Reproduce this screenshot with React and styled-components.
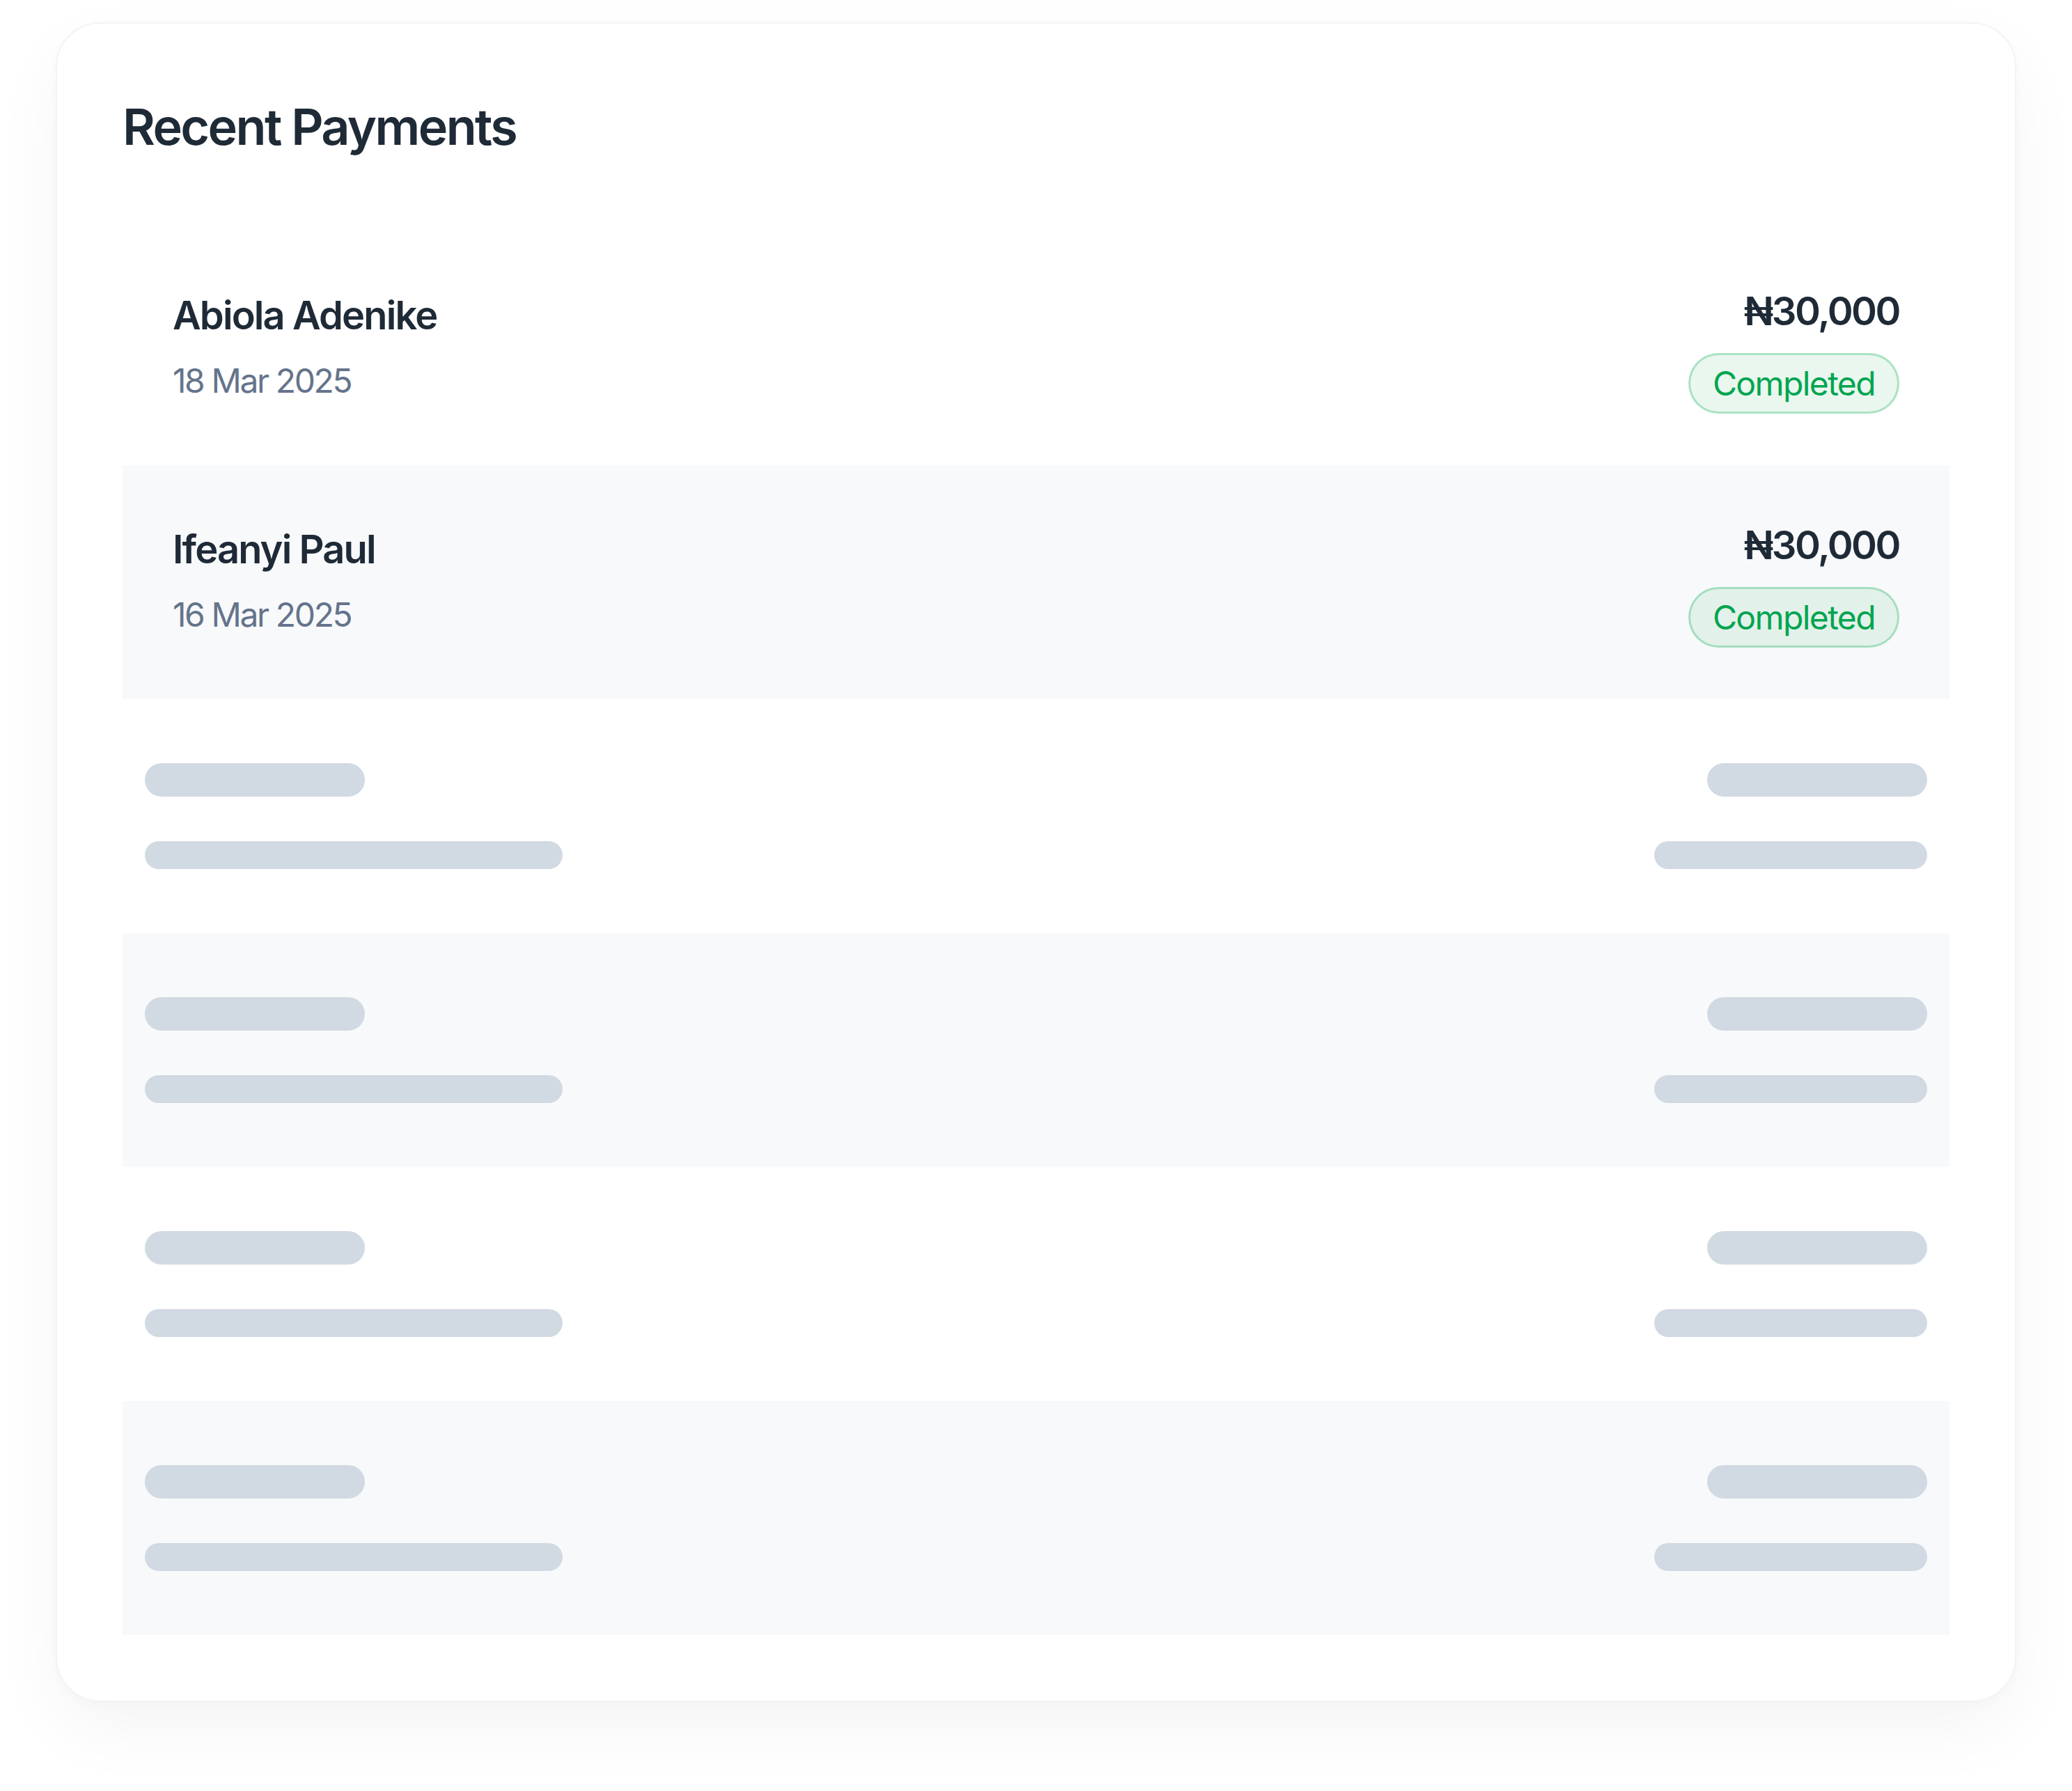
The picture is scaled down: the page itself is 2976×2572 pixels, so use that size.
import styled, { createGlobalStyle } from 'styled-components'

const GlobalStyle = createGlobalStyle`
  * { box-sizing: border-box; }
  html, body {
    margin: 0;
    padding: 0;
    background: #ffffff;
    font-family: Inter, "Noto Sans", "DejaVu Sans", sans-serif;
    -webkit-font-smoothing: antialiased;
  }
`

const payments = [
  { name: 'Abiola Adenike', date: '18 Mar 2025', amount: '₦30,000', status: 'Completed' },
  { name: 'Ifeanyi Paul', date: '16 Mar 2025', amount: '₦30,000', status: 'Completed' }
]

const placeholders = 4

export default function App() {
  return (
    <>
      <GlobalStyle />
      <Page>
        <Card>
          <Title>Recent Payments</Title>
          <List>
            {payments.map((p, i) => (
              <Row key={p.name} $striped={i % 2 === 1}>
                <Left>
                  <Name>{p.name}</Name>
                  <DateText>{p.date}</DateText>
                </Left>
                <Right>
                  <Amount>{p.amount}</Amount>
                  <Badge>{p.status}</Badge>
                </Right>
              </Row>
            ))}
            {Array.from({ length: placeholders }).map((_, i) => (
              <SkeletonRow key={i} $striped={(payments.length + i) % 2 === 1}>
                <SkeletonCol>
                  <Bar $w={316} $h={48} />
                  <Bar $w={600} $h={40} />
                </SkeletonCol>
                <SkeletonCol $right>
                  <Bar $w={316} $h={48} />
                  <Bar $w={392} $h={40} />
                </SkeletonCol>
              </SkeletonRow>
            ))}
          </List>
        </Card>
      </Page>
    </>
  )
}

const Page = styled.div`
  padding: 32px 80px 128px;
`

const Card = styled.div`
  background: #ffffff;
  border: 2px solid #f2f4f6;
  border-radius: 64px;
  padding: 94px;
  box-shadow: 0 40px 100px rgba(16, 24, 40, 0.045), 0 4px 16px rgba(16, 24, 40, 0.02);
`

const Title = styled.h2`
  margin: 0 0 96px;
  font-size: 72px;
  line-height: 108px;
  font-weight: 600;
  letter-spacing: -2.65px;
  color: #1f2a37;
`

const List = styled.div`
  display: flex;
  flex-direction: column;
`

const Row = styled.div`
  height: 336px;
  padding: 0 72px;
  display: flex;
  align-items: center;
  justify-content: space-between;
  background: ${p => (p.$striped ? '#f8f9fb' : '#ffffff')};
`

const Left = styled.div`
  display: flex;
  flex-direction: column;
  gap: 18px;
  padding-bottom: 5px;
`

const Name = styled.div`
  font-size: 56px;
  line-height: 80px;
  font-weight: 600;
  letter-spacing: -1.9px;
  color: #1f2a37;
`

const DateText = styled.div`
  font-size: 48px;
  line-height: 72px;
  font-weight: 400;
  letter-spacing: -2.4px;
  color: #64748b;
`

const Right = styled.div`
  display: flex;
  flex-direction: column;
  align-items: flex-end;
  gap: 20px;
`

const Amount = styled.div`
  font-size: 56px;
  line-height: 80px;
  font-weight: 600;
  letter-spacing: -2.5px;
  color: #1f2a37;
`

const Badge = styled.span`
  display: inline-block;
  padding: 12px 32px;
  font-size: 48px;
  line-height: 57px;
  letter-spacing: -1.6px;
  color: #00a54f;
  background: rgba(22, 163, 74, 0.09);
  border: 3px solid rgba(22, 180, 90, 0.3);
  border-radius: 999px;
`

const SkeletonRow = styled.div`
  height: 336px;
  padding: 0 32px;
  display: flex;
  align-items: center;
  justify-content: space-between;
  background: ${p => (p.$striped ? '#f8f9fb' : '#ffffff')};
`

const SkeletonCol = styled.div`
  display: flex;
  flex-direction: column;
  align-items: ${p => (p.$right ? 'flex-end' : 'flex-start')};
  gap: 64px;
`

const Bar = styled.div`
  width: ${p => p.$w}px;
  height: ${p => p.$h}px;
  border-radius: 999px;
  background: #d1d9e2;
`
